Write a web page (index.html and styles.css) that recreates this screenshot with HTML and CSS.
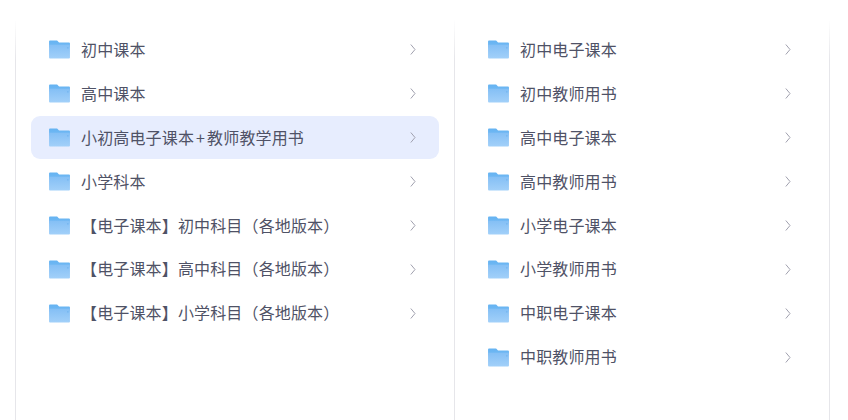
FILE: index.html
```html
<!DOCTYPE html>
<html lang="zh-CN">
<head>
    <meta charset="UTF-8">
    <title>课本目录</title>
    <link rel="stylesheet" href="styles.css">
</head>
<body>
<svg class="svg-defs" width="0" height="0">
    <defs>
        <linearGradient id="folderBack" x1="0" y1="0" x2="0" y2="1">
            <stop offset="0" stop-color="#65b3f2"/>
            <stop offset="1" stop-color="#74baf3"/>
        </linearGradient>
        <linearGradient id="folderFront" x1="0" y1="0" x2="0" y2="1">
            <stop offset="0" stop-color="#84bff5"/>
            <stop offset="1" stop-color="#a2d0f9"/>
        </linearGradient>
        <symbol id="folder" viewBox="0 0 22 20">
            <path d="M0 1.5Q0 0.5 1 0.5H8.5L10.5 2.5H21Q22 2.5 22 3.5V8H0Z" fill="url(#folderBack)"/>
            <path d="M0 5H21Q22 5 22 6V18.5Q22 19.5 21 19.5H1Q0 19.5 0 18.5Z" fill="url(#folderFront)"/>
            <rect x="19" y="7.5" width="1.5" height="1.5" fill="#74b6f0"/>
        </symbol>
        <symbol id="arrow" viewBox="0 0 6 11">
            <path d="M0.8 0.5L5 5.5L0.8 10.5" fill="none" stroke="#a0a0ae" stroke-width="1"/>
        </symbol>
    </defs>
</svg>
<div class="menu">
    <ul class="panel">
        <li class="item"><svg class="folder"><use href="#folder"/></svg><span class="name">初中课本</span><svg class="arrow"><use href="#arrow"/></svg></li>
        <li class="item"><svg class="folder"><use href="#folder"/></svg><span class="name">高中课本</span><svg class="arrow"><use href="#arrow"/></svg></li>
        <li class="item active"><svg class="folder"><use href="#folder"/></svg><span class="name">小初高电子课本<span class="plus">+</span>教师教学用书</span><svg class="arrow"><use href="#arrow"/></svg></li>
        <li class="item"><svg class="folder"><use href="#folder"/></svg><span class="name">小学科本</span><svg class="arrow"><use href="#arrow"/></svg></li>
        <li class="item"><svg class="folder"><use href="#folder"/></svg><span class="name">【电子课本】初中科目（各地版本）</span><svg class="arrow"><use href="#arrow"/></svg></li>
        <li class="item"><svg class="folder"><use href="#folder"/></svg><span class="name">【电子课本】高中科目（各地版本）</span><svg class="arrow"><use href="#arrow"/></svg></li>
        <li class="item"><svg class="folder"><use href="#folder"/></svg><span class="name">【电子课本】小学科目（各地版本）</span><svg class="arrow"><use href="#arrow"/></svg></li>
    </ul>
    <ul class="panel panel-sub">
        <li class="item"><svg class="folder"><use href="#folder"/></svg><span class="name">初中电子课本</span><svg class="arrow"><use href="#arrow"/></svg></li>
        <li class="item"><svg class="folder"><use href="#folder"/></svg><span class="name">初中教师用书</span><svg class="arrow"><use href="#arrow"/></svg></li>
        <li class="item"><svg class="folder"><use href="#folder"/></svg><span class="name">高中电子课本</span><svg class="arrow"><use href="#arrow"/></svg></li>
        <li class="item"><svg class="folder"><use href="#folder"/></svg><span class="name">高中教师用书</span><svg class="arrow"><use href="#arrow"/></svg></li>
        <li class="item"><svg class="folder"><use href="#folder"/></svg><span class="name">小学电子课本</span><svg class="arrow"><use href="#arrow"/></svg></li>
        <li class="item"><svg class="folder"><use href="#folder"/></svg><span class="name">小学教师用书</span><svg class="arrow"><use href="#arrow"/></svg></li>
        <li class="item"><svg class="folder"><use href="#folder"/></svg><span class="name">中职电子课本</span><svg class="arrow"><use href="#arrow"/></svg></li>
        <li class="item"><svg class="folder"><use href="#folder"/></svg><span class="name">中职教师用书</span><svg class="arrow"><use href="#arrow"/></svg></li>
    </ul>
</div>
</body>
</html>
```

FILE: styles.css
```css
html, body {
    height: 100%;
}

body {
    margin: 0;
    background-color: #ffffff;
    font-family: "Noto Sans CJK SC", "Liberation Sans", sans-serif;
    overflow: hidden;
}

.svg-defs {
    display: block;
}

.menu {
    display: flex;
    box-sizing: border-box;
    width: 815px;
    height: 400px;
    margin: 20px 0 0 15px;
    border-left: 1px solid #e6e6ea;
    border-right: 1px solid #e6e6ea;
    border-image: linear-gradient(to bottom, #ffffff, #e6e6ea 40px) 1;
}

.panel {
    display: flex;
    flex-direction: column;
    gap: 0.9px;
    list-style: none;
    margin: 0;
    padding: 8.45px 15px 0;
    box-sizing: border-box;
}

.panel:first-child {
    width: 439px;
    border-right: 1px solid #e6e6ea;
    border-image: linear-gradient(to bottom, #ffffff, #e6e6ea 40px) 1;
}

.panel-sub {
    flex: 1;
}

.item {
    display: flex;
    align-items: center;
    height: 43px;
    padding: 0 23px 0 18px;
    border-radius: 9px;
    color: #4f5266;
    font-size: 16px;
    line-height: 22px;
    letter-spacing: 0.15px;
}

.item.active {
    background-color: #e7edfe;
}

.folder {
    width: 21px;
    height: 19px;
    margin-right: 11px;
    flex-shrink: 0;
}

.name {
    flex: 1;
    position: relative;
    top: -1px;
}

.plus {
    margin: 0 2px;
}

.arrow {
    width: 6px;
    height: 11px;
    flex-shrink: 0;
}
```
